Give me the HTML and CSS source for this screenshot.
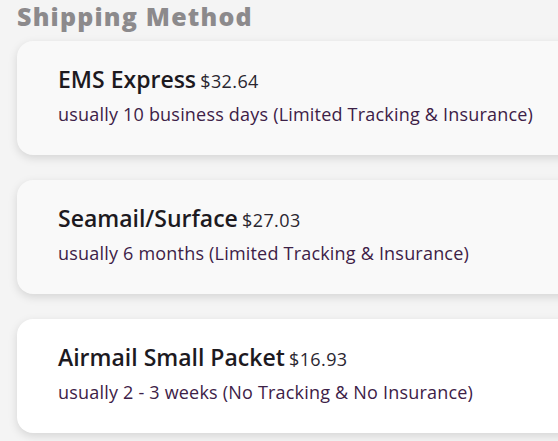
FILE: index.html
```html
<!DOCTYPE html>
<html>
<head>
<meta charset="utf-8">
<link rel="stylesheet" href="styles.css">
</head>
<body>
<div class="page">
  <h2 class="heading">Shipping Method</h2>
  <div class="list">
    <div class="card">
      <div class="title"><span class="name">EMS Express</span> <span class="price">$32.64</span></div>
      <div class="desc">usually 10 business days (Limited Tracking &amp; Insurance)</div>
    </div>
    <div class="card">
      <div class="title"><span class="name">Seamail/Surface</span> <span class="price">$27.03</span></div>
      <div class="desc">usually 6 months (Limited Tracking &amp; Insurance)</div>
    </div>
    <div class="card selected">
      <div class="title"><span class="name">Airmail Small Packet</span> <span class="price">$16.93</span></div>
      <div class="desc">usually 2 - 3 weeks (No Tracking &amp; No Insurance)</div>
    </div>
  </div>
</div>
</body>
</html>
```
FILE: styles.css
```css
html, body {
  margin: 0;
  padding: 0;
  background: #f4f4f4;
  overflow: hidden;
}
.page {
  width: 558px;
  height: 441px;
  overflow: hidden;
  padding: 0 0 0 17px;
  box-sizing: border-box;
  font-family: "Open Sans", "Lato", sans-serif;
}
.heading {
  margin: 0;
  padding-top: 1px;
  height: 40px;
  font-size: 25px;
  line-height: 30px;
  font-weight: 800;
  color: #8c8a8c;
  letter-spacing: 1.2px;
}
.list {
  display: flex;
  flex-direction: column;
  gap: 25px;
}
.card {
  width: 600px;
  height: 114px;
  box-sizing: border-box;
  background: #f9f9f9;
  border-radius: 16px;
  box-shadow: 0 3px 10px rgba(0, 0, 0, 0.13);
  padding: 24px 0 0 41px;
}
.card.selected {
  background: #ffffff;
}
.title {
  line-height: 28px;
  color: #1d1a1f;
  white-space: nowrap;
}
.name {
  font-size: 23px;
  font-weight: 600;
}
.price {
  font-size: 18px;
  letter-spacing: 0.4px;
  color: #2a2630;
}
.desc {
  margin-top: 6px;
  font-size: 18px;
  line-height: 24px;
  letter-spacing: 0.2px;
  color: #3d2147;
  white-space: nowrap;
}
```
